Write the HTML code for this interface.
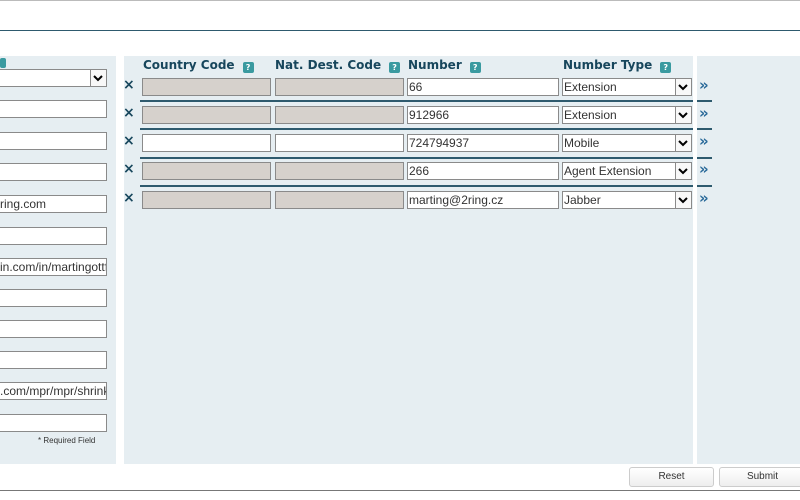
<!DOCTYPE html><html><head><style>
body{margin:0;width:800px;height:500px;background:#fff;position:relative;overflow:hidden;font-family:"Liberation Sans",sans-serif}
.a{position:absolute}
.in{position:absolute;height:16px;border:1px solid #8a8a8a;background:#fff;font-size:12px;line-height:16px;color:#333;padding-left:1px;white-space:nowrap;overflow:hidden;box-sizing:content-box}
.g{background:#d6d1cc}
.sel:after{content:"";position:absolute;right:0;top:0;width:15px;height:16px;border-left:1px solid #8a8a8a;background:#f8f8f8}
.chev{position:absolute;right:3px;top:3px;width:10px;height:10px;z-index:2}
.h{position:absolute;top:58px;font-family:"DejaVu Sans",sans-serif;font-size:12px;font-weight:bold;color:#17465c}
.q{display:inline-block;width:11px;height:11px;border-radius:2px;background:#3a9aa0;color:#fff;font-size:8px;line-height:11px;text-align:center;margin-left:8px;vertical-align:-1px}
.x{position:absolute;left:123px;font-family:"DejaVu Sans",sans-serif;font-size:14px;font-weight:bold;color:#17465c}
.r{position:absolute;left:699px;font-family:"DejaVu Sans",sans-serif;font-size:15px;font-weight:bold;color:#2a6a9a}
.ln{position:absolute;height:2px;background:#2e5a6e}
.btn{position:absolute;top:467px;height:18px;border:1px solid #ccc;border-radius:3px;background:linear-gradient(#fff,#eee);font-size:10px;text-align:center;line-height:18px;color:#333}
</style></head><body>
<div class="a" style="left:0;top:0;width:800px;height:1px;background:#bbb"></div>
<div class="a" style="left:0;top:30px;width:800px;height:1px;background:#2e5a6e"></div>
<div class="a" style="left:0;top:56px;width:116px;height:408px;background:#e6eef2"></div>
<div class="a" style="left:124px;top:56px;width:569px;height:408px;background:#e6eef2"></div>
<div class="a" style="left:697px;top:56px;width:103px;height:408px;background:#e6eef2"></div>
<div class="a" style="left:0;top:58px;width:6px;height:10px;border-radius:2px;background:#3a9aa0"></div>
<div class="in sel" style="left:-2px;top:69px;width:106px"><svg class="chev" viewBox="0 0 10 10"><path d="M1 3l4 4 4-4" stroke="#000" stroke-width="2" fill="none"/></svg></div>
<div class="in" style="left:-2px;top:100px;width:106px"></div>
<div class="in" style="left:-2px;top:132px;width:106px"></div>
<div class="in" style="left:-2px;top:163px;width:106px"></div>
<div class="in" style="left:-2px;top:195px;width:106px">ring.com</div>
<div class="in" style="left:-2px;top:227px;width:106px"></div>
<div class="in" style="left:-2px;top:258px;width:106px">in.com/in/martingottf</div>
<div class="in" style="left:-2px;top:289px;width:106px"></div>
<div class="in" style="left:-2px;top:320px;width:106px"></div>
<div class="in" style="left:-2px;top:351px;width:106px"></div>
<div class="in" style="left:-2px;top:382px;width:106px">.com/mpr/mpr/shrink</div>
<div class="in" style="left:-2px;top:414px;width:106px"></div>
<div class="a" style="left:38px;top:436px;font-size:8px;color:#333">* Required Field</div>
<div class="h" style="left:143px">Country Code<span class="q">?</span></div>
<div class="h" style="left:275px">Nat. Dest. Code<span class="q">?</span></div>
<div class="h" style="left:408px">Number<span class="q">?</span></div>
<div class="h" style="left:563px">Number Type<span class="q">?</span></div>

<div class="x" style="top:77px">×</div><div class="in g" style="left:142px;top:78px;width:126px"></div><div class="in g" style="left:275px;top:78px;width:126px"></div><div class="in" style="left:407px;top:78px;width:149px">66</div><div class="in sel" style="left:562px;top:78px;width:127px">Extension<svg class="chev" viewBox="0 0 10 10"><path d="M1 3l4 4 4-4" stroke="#000" stroke-width="2" fill="none"/></svg></div><div class="r" style="top:76px">»</div>
<div class="ln" style="left:140px;top:100px;width:553px"></div><div class="ln" style="left:697px;top:100px;width:15px"></div>
<div class="x" style="top:105px">×</div><div class="in g" style="left:142px;top:106px;width:126px"></div><div class="in g" style="left:275px;top:106px;width:126px"></div><div class="in" style="left:407px;top:106px;width:149px">912966</div><div class="in sel" style="left:562px;top:106px;width:127px">Extension<svg class="chev" viewBox="0 0 10 10"><path d="M1 3l4 4 4-4" stroke="#000" stroke-width="2" fill="none"/></svg></div><div class="r" style="top:104px">»</div>
<div class="ln" style="left:140px;top:128px;width:553px"></div><div class="ln" style="left:697px;top:128px;width:15px"></div>
<div class="x" style="top:133px">×</div><div class="in" style="left:142px;top:134px;width:126px"></div><div class="in" style="left:275px;top:134px;width:126px"></div><div class="in" style="left:407px;top:134px;width:149px">724794937</div><div class="in sel" style="left:562px;top:134px;width:127px">Mobile<svg class="chev" viewBox="0 0 10 10"><path d="M1 3l4 4 4-4" stroke="#000" stroke-width="2" fill="none"/></svg></div><div class="r" style="top:132px">»</div>
<div class="ln" style="left:140px;top:157px;width:553px"></div><div class="ln" style="left:697px;top:157px;width:15px"></div>
<div class="x" style="top:161px">×</div><div class="in g" style="left:142px;top:162px;width:126px"></div><div class="in g" style="left:275px;top:162px;width:126px"></div><div class="in" style="left:407px;top:162px;width:149px">266</div><div class="in sel" style="left:562px;top:162px;width:127px">Agent Extension<svg class="chev" viewBox="0 0 10 10"><path d="M1 3l4 4 4-4" stroke="#000" stroke-width="2" fill="none"/></svg></div><div class="r" style="top:160px">»</div>
<div class="ln" style="left:140px;top:185px;width:553px"></div><div class="ln" style="left:697px;top:185px;width:15px"></div>
<div class="x" style="top:190px">×</div><div class="in g" style="left:142px;top:191px;width:126px"></div><div class="in g" style="left:275px;top:191px;width:126px"></div><div class="in" style="left:407px;top:191px;width:149px">marting@2ring.cz</div><div class="in sel" style="left:562px;top:191px;width:127px">Jabber<svg class="chev" viewBox="0 0 10 10"><path d="M1 3l4 4 4-4" stroke="#000" stroke-width="2" fill="none"/></svg></div><div class="r" style="top:189px">»</div>

<div class="btn" style="left:629px;width:83px">Reset</div>
<div class="btn" style="left:719px;width:85px">Submit</div>
<div class="a" style="left:0;top:490px;width:800px;height:1px;background:#777"></div>
</body></html>
